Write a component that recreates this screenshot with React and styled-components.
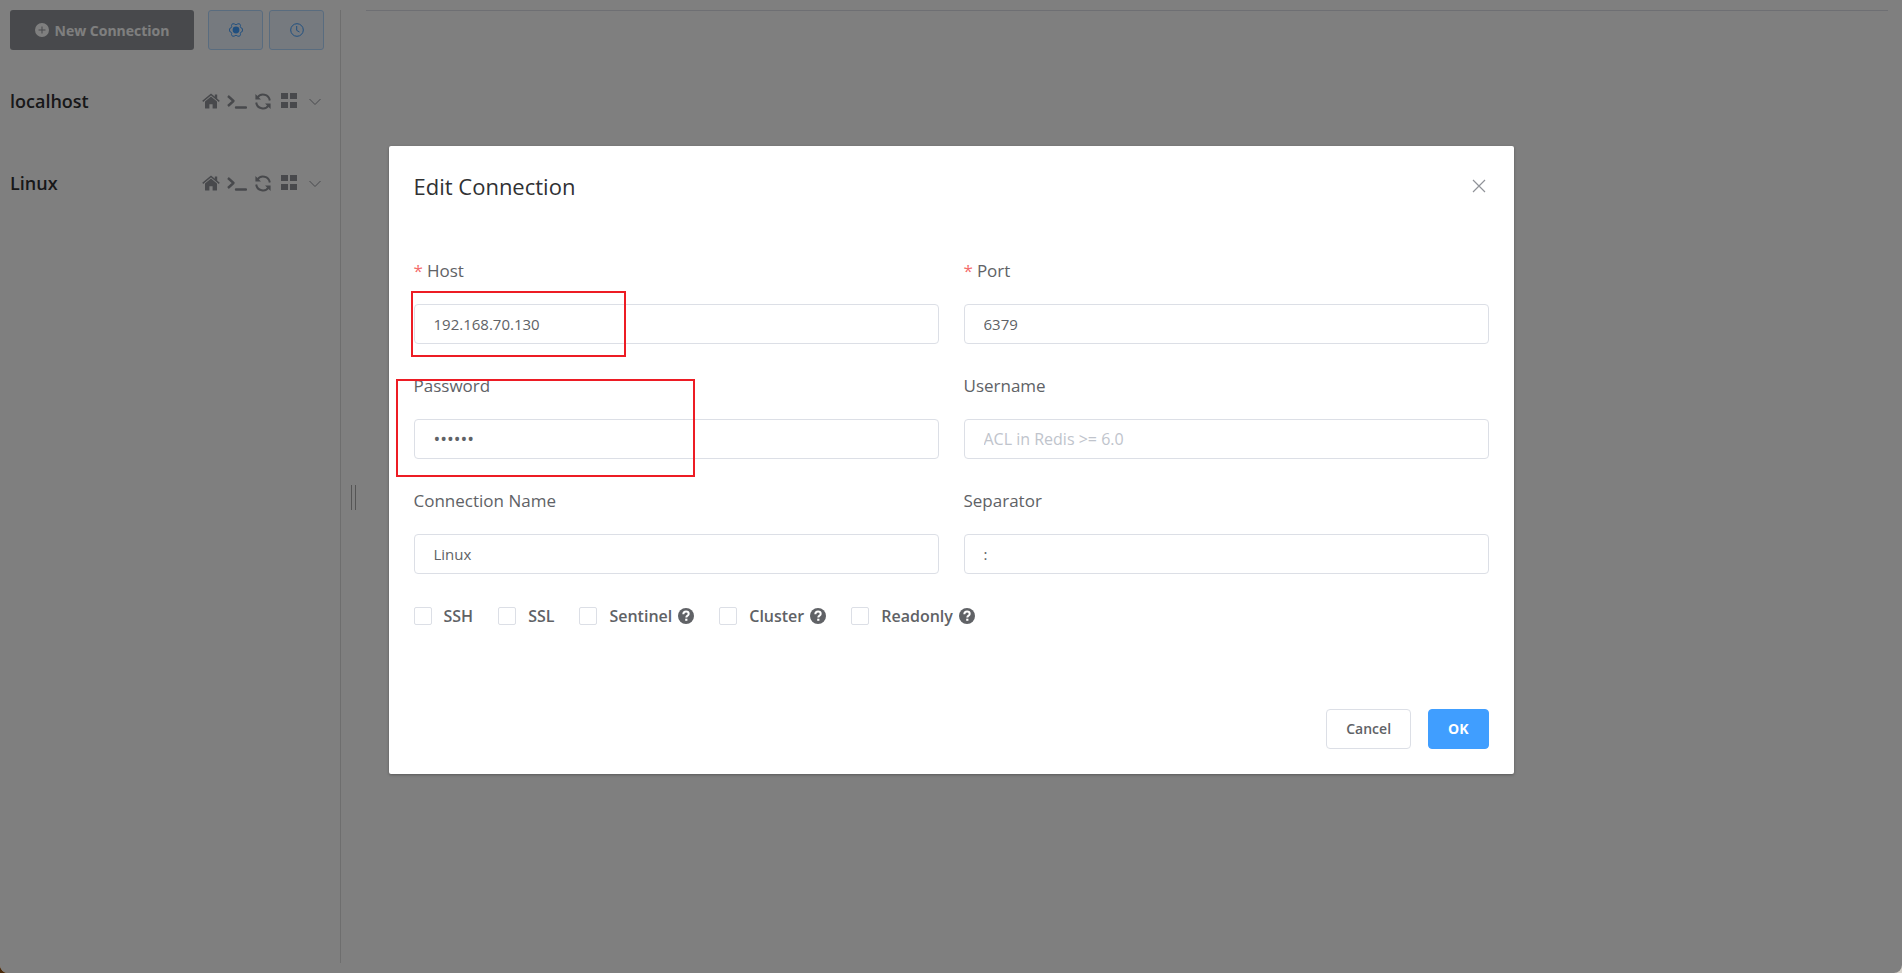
import styled, { createGlobalStyle } from "styled-components";

const App = () => {
    return (
        <>
            <GlobalStyle />
            <Page>
                <Sidebar>
                    <Toolbar>
                        <NewButton type="button">
                            <PlusIcon />
                            New Connection
                        </NewButton>
                        <ToolButtons>
                            <PlainButton type="button" aria-label="Settings">
                                <SettingIcon />
                            </PlainButton>
                            <PlainButton type="button" aria-label="Command log">
                                <ClockIcon />
                            </PlainButton>
                        </ToolButtons>
                    </Toolbar>
                    <ConnectionList>
                        <Connection name="localhost" />
                        <Connection name="Linux" />
                    </ConnectionList>
                </Sidebar>
                <DragHandle />
                <Main />
                <Overlay>
                    <Dialog role="dialog" aria-labelledby="dialog-title">
                        <DialogHeader>
                            <Title id="dialog-title">Edit Connection</Title>
                            <CloseButton type="button" aria-label="Close">
                                <CloseIcon />
                            </CloseButton>
                        </DialogHeader>
                        <form>
                            <Fields>
                                <Field id="host" label="Host" required defaultValue="192.168.70.130" mark={<HostMark />} />
                                <Field id="port" label="Port" required defaultValue="6379" />
                                <Field id="password" label="Password" type="password" defaultValue="123456" mark={<PasswordMark />} />
                                <Field id="username" label="Username" placeholder="ACL in Redis >= 6.0" />
                                <Field id="name" label="Connection Name" defaultValue="Linux" />
                                <Field id="separator" label="Separator" defaultValue=":" />
                            </Fields>
                            <Options>
                                <Option label="SSH" />
                                <Option label="SSL" />
                                <Option label="Sentinel" help />
                                <Option label="Cluster" help />
                                <Option label="Readonly" help />
                            </Options>
                            <DialogFooter>
                                <FooterButton type="button">Cancel</FooterButton>
                                <FooterButton type="button" $primary>OK</FooterButton>
                            </DialogFooter>
                        </form>
                    </Dialog>
                </Overlay>
            </Page>
        </>
    );
};

export default App;

const Connection = ({ name }) => {
    return (
        <ConnectionRow>
            <ConnectionName>{name}</ConnectionName>
            <Actions>
                <IconButton type="button" aria-label="Home"><HomeIcon /></IconButton>
                <IconButton type="button" aria-label="Console"><TerminalIcon /></IconButton>
                <IconButton type="button" aria-label="Refresh"><RefreshIcon /></IconButton>
                <IconButton type="button" aria-label="Menu"><GridIcon /></IconButton>
                <IconButton type="button" aria-label="Expand"><ArrowIcon /></IconButton>
            </Actions>
        </ConnectionRow>
    );
};

const Field = ({ id, label, required, mark, ...rest }) => {
    return (
        <FieldItem>
            <Label htmlFor={id}>
                {required && <Star>*</Star>}
                {label}
            </Label>
            <Input id={id} type="text" {...rest} />
            {mark}
        </FieldItem>
    );
};

const Option = ({ label, help }) => {
    return (
        <OptionLabel>
            <Checkbox type="checkbox" />
            <span>{label}</span>
            {help && <HelpIcon />}
        </OptionLabel>
    );
};

const PlusIcon = () => (
    <svg width="14" height="14" viewBox="0 0 14 14" aria-hidden="true">
        <path fillRule="evenodd" fill="currentColor" d="M7 0a7 7 0 1 0 0 14A7 7 0 0 0 7 0zM6.5 3.5h1v3h3v1h-3v3h-1v-3h-3v-1h3z" />
    </svg>
);

const SettingIcon = () => (
    <svg width="14" height="14" viewBox="0 0 14 14" aria-hidden="true">
        <path
            fill="none"
            stroke="currentColor"
            strokeLinejoin="round"
            d="M3.4 .8h1.8l.9.7h1.8l.9-.7h1.8l.9 1.6-.2 1.2.9 1.5 1.2.5v2.8l-1.2.5-.9 1.5.2 1.2-.9 1.6H8.8l-.9-.7H6.1l-.9.7H3.4l-.9-1.6.2-1.2-.9-1.5L.6 8.4V5.6l1.2-.5.9-1.5-.2-1.2z"
        />
        <circle cx="7" cy="7" r="3.4" fill="currentColor" />
    </svg>
);

const ClockIcon = () => (
    <svg width="14" height="14" viewBox="0 0 14 14" fill="none" stroke="currentColor" aria-hidden="true">
        <circle cx="7" cy="7" r="6.3" />
        <path d="M6.7 3v4.4l2.8 1.6" />
    </svg>
);

const HomeIcon = () => (
    <svg width="18" height="16" viewBox="0 0 18 16" aria-hidden="true">
        <path fill="currentColor" d="M9 3.6l6 5V15q0 .6-.6.6h-3.8v-4.4H7.4v4.4H3.6Q3 15.6 3 15V8.6z" />
        <path fill="none" stroke="currentColor" strokeWidth="1.5" d="M.7 8.3L9 1.5l8.3 6.8" />
        <path fill="currentColor" d="M12.8 1.5h2.4v5l-2.4-2z" />
    </svg>
);

const TerminalIcon = () => (
    <svg width="20" height="16" viewBox="0 0 20 16" fill="none" stroke="currentColor" aria-hidden="true">
        <path strokeWidth="2.4" strokeLinejoin="round" d="M1 3l5.500 5L1 13" />
        <path strokeWidth="2.4" strokeLinecap="round" d="M9 14.500h10" />
    </svg>
);

const RefreshIcon = () => (
    <svg width="18" height="17" viewBox="0 0 18 17" aria-hidden="true">
        <g fill="none" stroke="currentColor" strokeWidth="2">
            <path d="M3.2 4.9A6.8 6.8 0 0 1 15.8 7.5" />
            <path d="M14.8 12.1A6.8 6.8 0 0 1 2.2 9.5" />
        </g>
        <path fill="currentColor" d="M1.4 1v5.600H7zM16.6 16v-5.600H11z" />
    </svg>
);

const GridIcon = () => (
    <svg width="16" height="16" viewBox="0 0 16 16" aria-hidden="true">
        <path fill="currentColor" d="M0 0h7v6H0zM9 0h7v6H9zM0 9h7v6H0zM9 9h7v6H9z" />
    </svg>
);

const ArrowIcon = () => (
    <svg width="12" height="10" viewBox="0 0 12 10" fill="none" stroke="currentColor" aria-hidden="true">
        <path d="M.5 3L6 8.500 11.500 3" />
    </svg>
);

const CloseIcon = () => (
    <svg width="14" height="14" viewBox="0 0 14 14" fill="none" stroke="currentColor" aria-hidden="true">
        <path strokeWidth="1.2" d="M1 1l12 12M13 1L1 13" />
    </svg>
);

const HelpIcon = () => (
    <svg width="16" height="16" viewBox="0 0 16 16" aria-hidden="true">
        <circle cx="8" cy="8" r="8" fill="currentColor" />
        <path fill="none" stroke="#fff" strokeWidth="2" d="M5.3 6.2C5.4 4.4 6.5 3.6 8 3.600s2.700.9 2.700 2.300c0 1.700-2.400 1.700-2.400 3.500" />
        <path fill="#fff" d="M7.2 10.7h2.2v2.1H7.2z" />
    </svg>
);

const GlobalStyle = createGlobalStyle`
    * {
        box-sizing: border-box;
    }

    body {
        margin: 0;
        background: linear-gradient(to right, #4a2a0a, #d8d4cc);
        font-family: "Segoe UI", "Open Sans", "Noto Sans", sans-serif;
        color: #303133;
    }

    button, input {
        font-family: inherit;
    }
`

const Page = styled.div`
    position: relative;
    display: flex;
    min-height: 100vh;
    padding: 10px;
    background-color: white;
    border-radius: 0 0 8px 8px;
    overflow: hidden;
`

const Sidebar = styled.aside`
    width: 331px;
    padding-right: 16px;
    border-right: 1px solid #dcdcdc;
`

const Toolbar = styled.div`
    display: flex;
    justify-content: space-between;
`

const ToolButtons = styled.div`
    display: flex;
    gap: 6px;
`

const NewButton = styled.button`
    display: flex;
    align-items: center;
    justify-content: center;
    gap: 6px;
    width: 184px;
    height: 40px;
    padding: 0;
    border: none;
    border-radius: 3px;
    background-color: #909399;
    color: white;
    font-weight: 700;
    font-size: 14px;
`

const PlainButton = styled.button`
    display: flex;
    align-items: center;
    justify-content: center;
    width: 55px;
    height: 40px;
    padding: 0;
    border: 1px solid #b3d8ff;
    border-radius: 3px;
    background-color: #ecf5ff;
    color: #409eff;
`

const ConnectionList = styled.ul`
    margin: 23px 0 0;
    padding: 0;
    list-style: none;
`

const ConnectionRow = styled.li`
    display: flex;
    align-items: center;
    justify-content: space-between;
    height: 56px;
    margin-bottom: 26px;
`

const ConnectionName = styled.span`
    font-weight: 600;
    font-size: 18px;
`

const Actions = styled.div`
    display: flex;
    align-items: center;
    gap: 8px;
`

const IconButton = styled.button`
    display: flex;
    justify-content: center;
    width: 18px;
    padding: 0;
    border: none;
    background: none;
    color: #909399;

    svg {
        flex-shrink: 0;
    }
`

const DragHandle = styled.div`
    align-self: center;
    width: 5px;
    height: 25px;
    margin: 22px 10px 0;
    border: solid #aaa;
    border-width: 0 1px;
`

const Main = styled.main`
    flex: 1;
    margin-right: 4px;
    border-top: 1px solid #dcdfe6;
`

const Overlay = styled.div`
    position: absolute;
    inset: 0;
    padding-top: 15vh;
    background-color: rgba(0, 0, 0, 0.5);
`

const Dialog = styled.section`
    width: 90%;
    max-width: 1125px;
    margin: 0 auto;
    padding: 25px;
    border-radius: 2px;
    background-color: white;
    box-shadow: 0 1px 3px rgba(0, 0, 0, 0.3);
`

const DialogHeader = styled.header`
    display: flex;
    align-items: center;
    justify-content: space-between;
    height: 30px;
    margin-bottom: 50px;
`

const Title = styled.h2`
    margin: 0;
    font-weight: 400;
    font-size: 22px;
`

const CloseButton = styled.button`
    display: flex;
    padding: 3px;
    border: none;
    background: none;
    color: #909399;
`

const Fields = styled.div`
    display: grid;
    grid-template-columns: 1fr 1fr;
    gap: 22px 25px;
`

const FieldItem = styled.div`
    position: relative;
    display: flex;
    flex-direction: column;
`

const Label = styled.label`
    display: flex;
    height: 53px;
    line-height: 40px;
    font-size: 17px;
    color: #606266;
`

const Star = styled.span`
    margin-right: 4px;
    color: #f56c6c;
`

const Input = styled.input`
    width: 100%;
    height: 40px;
    padding: 0 19px;
    border: 1px solid #dcdfe6;
    border-radius: 4px;
    outline: none;
    background-color: white;
    font-size: 15px;
    color: #606266;

    &[type="password"] {
        font-size: 18px;
    }

    &::placeholder {
        color: #c0c4cc;
        font-size: 16px;
    }
`

const Mark = styled.span`
    position: absolute;
    border: 2px solid #ed1c24;
    pointer-events: none;
`

const HostMark = styled(Mark)`
    top: 40px;
    left: -3px;
    width: 215px;
    height: 66px;
`

const PasswordMark = styled(Mark)`
    top: 13px;
    left: -18px;
    width: 299px;
    height: 98px;
`

const Options = styled.div`
    display: flex;
    gap: 25px;
    height: 40px;
    margin-top: 22px;
`

const OptionLabel = styled.label`
    display: flex;
    align-items: center;
    gap: 6px;
    font-weight: 600;
    font-size: 16px;
    color: #606266;
`

const Checkbox = styled.input`
    appearance: none;
    width: 18px;
    height: 18px;
    margin: 0 6px 0 0;
    border: 1px solid #dcdfe6;
    border-radius: 2px;
    background-color: white;
`

const DialogFooter = styled.footer`
    display: flex;
    justify-content: flex-end;
    gap: 17px;
    margin-top: 73px;
`

const FooterButton = styled.button`
    height: 40px;
    padding: 0 19px;
    border: 1px solid ${({ $primary }) => ($primary ? "#409eff" : "#dcdfe6")};
    border-radius: 4px;
    background-color: ${({ $primary }) => ($primary ? "#409eff" : "white")};
    color: ${({ $primary }) => ($primary ? "white" : "#606266")};
    font-weight: ${({ $primary }) => ($primary ? 700 : 600)};
    font-size: 14px;
`
